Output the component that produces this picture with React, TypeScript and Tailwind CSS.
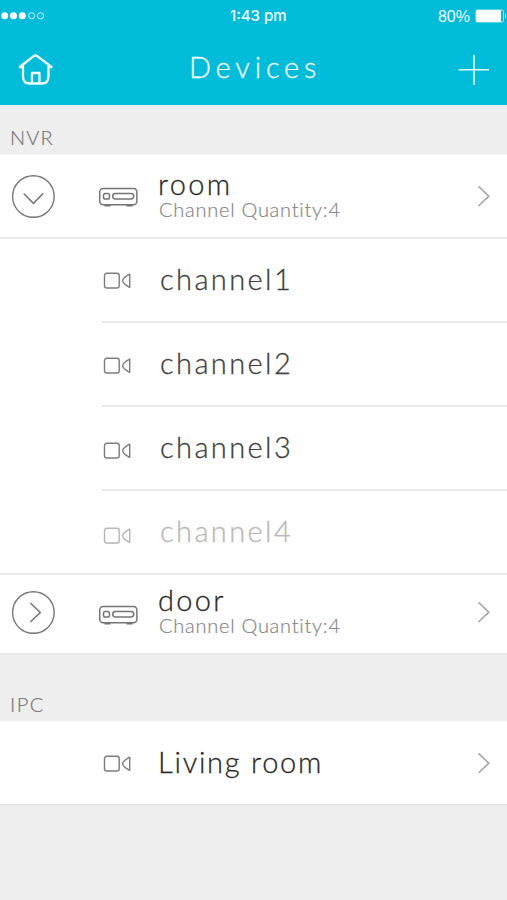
import React from "react";

function HomeIcon() {
  return (
    <svg className="block" width="36" height="32" viewBox="0 0 36 32" fill="none" stroke="#f2fdff" strokeWidth="2.3" strokeLinecap="round" strokeLinejoin="round">
      <path d="M1.800 13 15.700 2.200Q17.500 .800 19.300 2.200L33.500 13M5 12V22.500Q5 29.500 12 29.500H23.500Q30.500 29.500 30.500 22.500V12M1.800 13H4.500M31 13H33.500" />
      <path d="M14 29V19H21.500V29" />
    </svg>
  );
}

function NvrIcon() {
  return (
    <svg className="block" width="40" height="22" viewBox="0 0 40 22" fill="none" stroke="#757575" strokeWidth="1.5">
      <rect x="1.700" y="1.500" width="37.200" height="16.200" rx="3.500" />
      <rect x="5.500" y="6.500" width="6" height="5.500" rx="1.800" />
      <rect x="14.700" y="6.500" width="21" height="5.500" rx="2.700" />
      <path d="M6.500 18.700h6M28.500 18.700h6" strokeWidth="1.800" />
    </svg>
  );
}

function CameraIcon({ faded = false }: { faded?: boolean }) {
  return (
    <svg className="block" width="30" height="18" viewBox="0 0 30 18" fill="none" stroke={faded ? "#b5b5b5" : "#7c7c7c"} strokeWidth="1.4">
      <rect x="2.500" y="1.300" width="14.700" height="14.700" rx="2.200" />
      <path d="M27.700 2.200V15.400C24.500 13.300 21 12.200 20.700 8.800C21 5.400 24.500 4.300 27.700 2.200Z" strokeLinejoin="round" />
    </svg>
  );
}

function ToggleIcon({ open = false }: { open?: boolean }) {
  return (
    <svg className="block" width="44" height="44" viewBox="0 0 44 44" fill="none" stroke="#777" strokeWidth="1.4">
      <circle cx="22.400" cy="22.500" r="20.800" />
      <path d={open ? "M12.700 19.500 22.400 29.300 32.200 19.500" : "M19.400 13 29.200 22.500 19.400 32"} strokeWidth="1.600" />
    </svg>
  );
}

function Chevron() {
  return (
    <svg className="block" width="14" height="22" viewBox="0 0 14 22" fill="none" stroke="#a6a6a6" strokeWidth="1.600">
      <path d="M1.500 1.300 11.800 11.200 1.500 21" />
    </svg>
  );
}

function NvrRow({ name, open = false }: { name: string; open?: boolean }) {
  return (
    <div className={`flex items-start border-b-2 border-[#e7e7e7] bg-white ${open ? "h-[84px]" : "h-[80px]"}`}>
      <div className={`ml-[11px] w-[87px] ${open ? "mt-[19px]" : "mt-[15px]"}`}><ToggleIcon open={open} /></div>
      <div className={`w-[60px] ${open ? "mt-[32px]" : "mt-[30px]"}`}><NvrIcon /></div>
      <div className={`flex-1 whitespace-nowrap ${open ? "mt-[14px]" : "mt-[10px]"}`}>
        <div className="text-[29px] leading-[30px] tracking-[2.3px] text-[#292929] [-webkit-text-stroke:0.3px]">{name}</div>
        <div className="ml-[1px] text-[20px] leading-[20px] tracking-[0.75px] text-[#858585] [-webkit-text-stroke:0.2px]">Channel Quantity:4</div>
      </div>
      <div className={`mr-[16px] ${open ? "mt-[30px]" : "mt-[26px]"}`}><Chevron /></div>
    </div>
  );
}

const channels = [
  { name: "channel1", icon: "mt-[33px]" },
  { name: "channel2", icon: "mt-[34px]" },
  { name: "channel3", icon: "mt-[35px]" },
  { name: "channel4", icon: "mt-[36px]" },
];

export default function App() {
  return (
    <div className="h-[900px] w-[507px] overflow-hidden bg-[#eeeeee] font-['Lato',sans-serif] font-light">
      <header className="h-[105px] bg-[#00bcd9] text-[#f2fdff]">
        <div className="flex h-[32px] items-center justify-between">
          <svg className="w-[229px]" height="10" viewBox="0 0 229 10" fill="#fff">
            <circle cx="4.700" cy="4.800" r="3.500" /><circle cx="13.500" cy="4.800" r="3.500" /><circle cx="22.300" cy="4.800" r="3.500" />
            <g fill="none" stroke="#c9f4fa"><circle cx="31.700" cy="4.800" r="3.100" /><circle cx="40.500" cy="4.800" r="3.100" /></g>
          </svg>
          <span className="w-[62px] whitespace-nowrap pl-[1px] pt-[1px] font-['Inter',sans-serif] text-[15px] font-medium">1:43 pm</span>
          <div className="flex flex-1 items-center justify-end gap-[5px]">
            <span className="pt-[1px] font-['Liberation_Sans',Arial,sans-serif] text-[16px] font-normal">80%</span>
            <svg width="32" height="14" viewBox="0 0 32 14"><rect x="1" y="1" width="27.500" height="12" rx="1.500" fill="none" stroke="#a9edf6" /><rect x="1" y="1" width="25" height="12" rx="1" fill="#fff" /><path d="M30 4.500Q32 7 30 9.500Z" fill="#fff" /></svg>
          </div>
        </div>
        <div className="flex h-[73px] items-start">
          <div className="ml-[18px] mt-[22px] w-[171px]"><HomeIcon /></div>
          <h1 className="mt-[18px] flex-1 whitespace-nowrap text-[29px] leading-[34px] tracking-[4.8px] [-webkit-text-stroke:0.3px]">Devices</h1>
          <svg className="mr-[17px] mt-[22px] block" width="32" height="32" viewBox="0 0 32 32" stroke="#e3faff" strokeWidth="1.600"><path d="M.700 15.700H31M16 .700V31" /></svg>
        </div>
      </header>

      <div className="h-[50px] pl-[10px] pt-[20px] text-[20px] leading-[24px] tracking-[1.2px] text-[#777] [-webkit-text-stroke:0.2px]">NVR</div>
      <NvrRow name="room" open />
      <div className="bg-white">
        {channels.map((c, i) => (
          <div key={c.name} className={`flex h-[84px] ${i === 3 ? "border-b-2 border-[#e7e7e7]" : ""}`}>
            <div className={`ml-[102px] flex flex-1 ${i === 3 ? "" : "border-b-2 border-[#e7e7e7]"}`}>
              <div className={`w-[58px] ${c.icon}`}><CameraIcon faded={i === 3} /></div>
              <div className={`mt-[25px] h-[30px] text-[29px] leading-[30px] tracking-[2.4px] [-webkit-text-stroke:0.3px] ${i === 3 ? "text-[#b8b8b8]" : "text-[#3d3d3d]"}`}>{c.name}</div>
            </div>
          </div>
        ))}
      </div>
      <NvrRow name="door" />

      <div className="h-[66px] pl-[10px] pt-[37px] text-[20px] leading-[24px] tracking-[1.5px] text-[#777] [-webkit-text-stroke:0.2px]">IPC</div>
      <div className="flex h-[84px] items-start border-b border-[#dedede] bg-white">
        <div className="ml-[102px] mt-[34px] w-[56px]"><CameraIcon /></div>
        <div className="mt-[26px] h-[30px] flex-1 whitespace-nowrap text-[29px] leading-[30px] tracking-[1.75px] text-[#292929] [-webkit-text-stroke:0.3px]">Living room</div>
        <div className="mr-[16px] mt-[31px]"><Chevron /></div>
      </div>
    </div>
  );
}
